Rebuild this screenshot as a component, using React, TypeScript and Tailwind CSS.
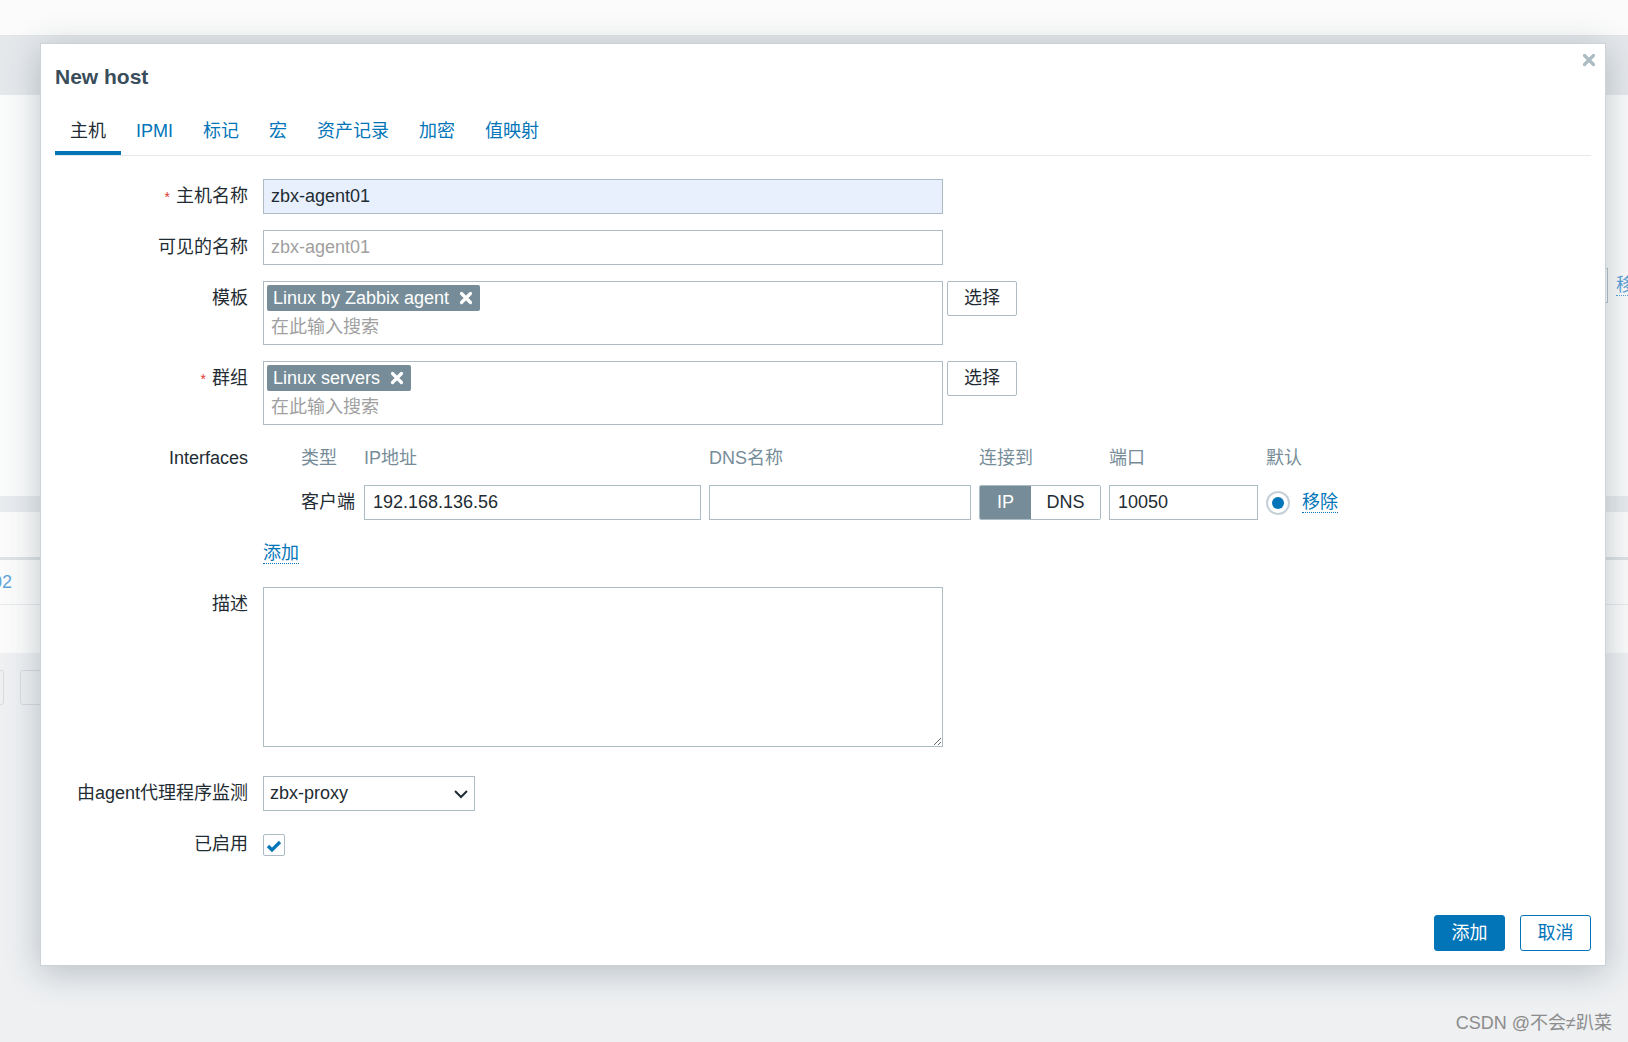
import React from "react";

function HeavyX({ className }: { className?: string }) {
  return (
    <svg viewBox="0 0 14 14" className={className} fill="none">
      <path d="M2.5 2.5 L11.5 11.5 M11.5 2.5 L2.5 11.5" stroke="currentColor" strokeWidth="3.2" strokeLinecap="round" />
    </svg>
  );
}

function Tag({ label }: { label: string }) {
  return (
    <span className="inline-flex h-[26px] items-center self-start rounded-[2px] bg-[#768d99] pl-[6px] pr-[7px] text-[18px] leading-[26px] text-white">
      {label}
      <HeavyX className="ml-[10px] h-[14px] w-[14px]" />
    </span>
  );
}

interface RowProps {
  label?: string;
  required?: boolean;
  className?: string;
  children: React.ReactNode;
}

function Row({ label, required, className, children }: RowProps) {
  return (
    <div className={"flex items-start " + (className ?? "")}>
      <div className="flex h-[35px] w-[193px] shrink-0 items-center justify-end text-[18px] text-[#1f2c33]">
        {required && <span className="mr-[6px] text-[14px] leading-none text-[#e33734]">*</span>}
        {label}
      </div>
      <div className="ml-[15px] flex items-start">{children}</div>
    </div>
  );
}

function MultiSelect({ tag }: { tag: string }) {
  return (
    <div className="flex h-[64px] w-[680px] flex-col border border-[#acbbc4] bg-white px-[3px] pt-[3px]">
      <Tag label={tag} />
      <div className="mt-[4px] pl-[4px] text-[18px] leading-[24px] text-[#a0a0a0]">在此输入搜索</div>
    </div>
  );
}

function SelectButton() {
  return (
    <button className="ml-[4px] flex h-[35px] w-[70px] items-center justify-center rounded-[2px] border border-[#acbbc4] bg-white text-[18px] text-[#1f2c33]">
      选择
    </button>
  );
}

const tabs = ["主机", "IPMI", "标记", "宏", "资产记录", "加密", "值映射"];

export default function App() {
  return (
    <div className="relative h-[1042px] w-[1628px] overflow-hidden bg-[#eef0f2] font-['Liberation_Sans','Noto_Sans_CJK_SC',sans-serif] text-[18px] text-[#1f2c33]">
      {/* page behind the dialog */}
      <div className="flex flex-col">
        <div className="h-[36px] border-b border-[#e0e4e7] bg-[#fbfbfb]" />
        <div className="h-[59px] bg-[#e5e8eb]" />
        <div className="h-[401px] bg-[#fafbfb] pt-[173px]">
          <div className="ml-[1560px] flex items-center">
            <div className="h-[35px] w-[48px] shrink-0 border border-[#b7c3ca] bg-white" />
            <span className="ml-[8px] shrink-0 border-b border-dotted border-[#5aa0d8] text-[18px] leading-[20px] text-[#5aa0d8]">移除</span>
          </div>
        </div>
        <div className="h-[16px] bg-[#e8ebee]" />
        <div className="h-[48px] border-b-[3px] border-[#dde2e5] bg-[#fbfbfb]" />
        <div className="flex h-[45px] items-center border-b border-[#e6e9ec] bg-[#fbfbfb]">
          <span className="-ml-[8px] text-[18px] text-[#63a5da]">02</span>
        </div>
        <div className="h-[48px] bg-[#fbfbfb]" />
        <div className="flex gap-[16px] pt-[17px]">
          <div className="-ml-[40px] h-[35px] w-[44px] rounded-[3px] border border-[#d5dbdf]" />
          <div className="h-[35px] w-[80px] rounded-[3px] border border-[#d5dbdf]" />
        </div>
      </div>

      {/* dialog */}
      <div className="absolute left-[40px] top-[43px] flex h-[923px] w-[1566px] flex-col border border-[#cbd3d8] bg-white px-[14px] pb-[14px] shadow-[0_6px_32px_rgba(40,60,75,0.28)]">
        <button className="absolute right-[9px] top-[9px] text-[#acbbc4]">
          <HeavyX className="h-[14px] w-[14px]" />
        </button>

        <h4 className="pt-[21px] text-[21px] font-bold leading-[24px] text-[#3a4d5a]">New host</h4>

        <div className="mt-[24px] flex border-b border-[#e6e9eb]">
          {tabs.map((t, i) => (
            <div
              key={t}
              className={
                i === 0
                  ? "border-b-4 border-[#0275b8] px-[15px] pb-[8px] pt-[6px] text-[18px] leading-[24px] text-[#1f2c33]"
                  : "border-b-4 border-transparent px-[15px] pb-[8px] pt-[6px] text-[18px] leading-[24px] text-[#0275b8]"
              }
            >
              {t}
            </div>
          ))}
        </div>

        <div className="mt-[23px] flex flex-1 flex-col gap-[16px]">
          <Row label="主机名称" required>
            <div className="flex h-[35px] w-[680px] items-center border border-[#acbbc4] bg-[#e8f0fe] px-[7px] text-[18px] text-[#1f2c33]">
              zbx-agent01
            </div>
          </Row>

          <Row label="可见的名称">
            <div className="flex h-[35px] w-[680px] items-center border border-[#acbbc4] bg-white px-[7px] text-[18px] text-[#a0a0a0]">
              zbx-agent01
            </div>
          </Row>

          <Row label="模板">
            <MultiSelect tag="Linux by Zabbix agent" />
            <SelectButton />
          </Row>

          <Row label="群组" required>
            <MultiSelect tag="Linux servers" />
            <SelectButton />
          </Row>

          <Row label="Interfaces">
            <div className="ml-[38px] grid grid-cols-[55px_337px_262px_122px_149px_auto] gap-x-[8px] gap-y-[9px] text-[18px]">
              <div className="flex h-[35px] items-center text-[#768d99]">类型</div>
              <div className="flex h-[35px] items-center text-[#768d99]">IP地址</div>
              <div className="flex h-[35px] items-center text-[#768d99]">DNS名称</div>
              <div className="flex h-[35px] items-center text-[#768d99]">连接到</div>
              <div className="flex h-[35px] items-center text-[#768d99]">端口</div>
              <div className="flex h-[35px] items-center text-[#768d99]">默认</div>

              <div className="flex h-[35px] items-center text-[#1f2c33]">客户端</div>
              <div className="flex h-[35px] items-center border border-[#acbbc4] bg-white px-[8px] text-[#1f2c33]">192.168.136.56</div>
              <div className="h-[35px] border border-[#acbbc4] bg-white" />
              <div className="flex h-[35px] overflow-hidden rounded-[2px] border border-[#acbbc4]">
                <div className="flex w-[51px] items-center justify-center bg-[#768d99] text-white">IP</div>
                <div className="flex flex-1 items-center justify-center bg-white text-[#1f2c33]">DNS</div>
              </div>
              <div className="flex h-[35px] items-center border border-[#acbbc4] bg-white px-[8px] text-[#1f2c33]">10050</div>
              <div className="flex h-[35px] items-center gap-[12px]">
                <span className="flex h-[24px] w-[24px] items-center justify-center rounded-full border-2 border-[#c6d0d6] bg-white">
                  <span className="h-[12px] w-[12px] rounded-full bg-[#0275b8]" />
                </span>
                <span className="border-b border-dotted border-[#0275b8] leading-[20px] text-[#0275b8]">移除</span>
              </div>
            </div>
          </Row>

          <Row>
            <div className="flex h-[35px] items-center">
              <span className="border-b border-dotted border-[#0275b8] text-[18px] leading-[20px] text-[#0275b8]">添加</span>
            </div>
          </Row>

          <Row label="描述">
            <textarea className="block h-[160px] w-[680px] border border-[#acbbc4] bg-white outline-none" defaultValue="" />
          </Row>

          <Row label="由agent代理程序监测" className="mt-[13px]">
            <div className="flex h-[35px] w-[212px] items-center justify-between border border-[#acbbc4] bg-white pl-[6px] pr-[5px] text-[18px] text-[#1f2c33]">
              zbx-proxy
              <svg viewBox="0 0 16 10" className="h-[10px] w-[16px]" fill="none">
                <path d="M2 2 L8 8 L14 2" stroke="#1f2c33" strokeWidth="2" />
              </svg>
            </div>
          </Row>

          <Row label="已启用">
            <div className="flex h-[35px] items-center">
              <span className="flex h-[22px] w-[22px] items-center justify-center rounded-[2px] border border-[#acbbc4] bg-white">
                <svg viewBox="0 0 20 20" className="h-[20px] w-[20px]" fill="none">
                  <path d="M4 11 L8 15 L16 7" stroke="#0275b8" strokeWidth="3.2" />
                </svg>
              </span>
            </div>
          </Row>
        </div>

        <div className="flex justify-end gap-[15px]">
          <button className="flex h-[36px] w-[71px] items-center justify-center rounded-[3px] border border-[#0275b8] bg-[#0275b8] text-[18px] text-white">
            添加
          </button>
          <button className="flex h-[36px] w-[71px] items-center justify-center rounded-[3px] border border-[#0275b8] bg-white text-[18px] text-[#0275b8]">
            取消
          </button>
        </div>
      </div>

      <div className="absolute right-[16px] top-[1011px] text-[18px] leading-[24px] text-[#8c8c8c]">CSDN @不会≠趴菜</div>
    </div>
  );
}
